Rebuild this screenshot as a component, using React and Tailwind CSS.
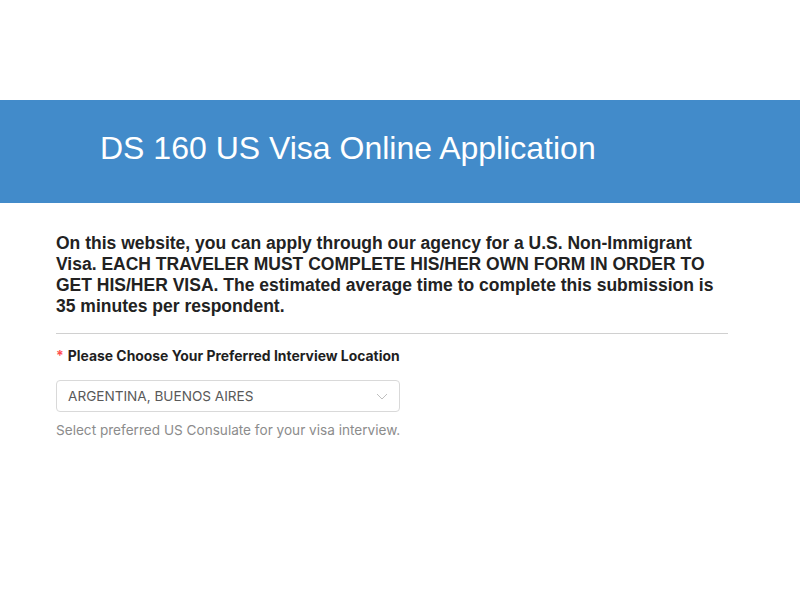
export default function App() {
  return (
    <div className="min-h-[600px] bg-white pt-[100px]">
      <div className="h-[103px] bg-[#428bca] flex items-center pl-[100px] pb-[8px]">
        <h1 className="text-white text-[32px] leading-none" style={{ fontFamily: '"Liberation Sans", Arial, sans-serif' }}>
          DS 160 US Visa Online Application
        </h1>
      </div>
      <div className="ml-[56px] w-[672px] pt-[30px]">
        <p className="text-[17.5px] leading-[21px] font-bold text-[#222]" style={{ fontFamily: '"Liberation Sans", Arial, sans-serif' }}>
          On this website, you can apply through our agency for a U.S. Non-Immigrant Visa. EACH TRAVELER MUST COMPLETE HIS/HER OWN FORM IN ORDER TO GET HIS/HER VISA. The estimated average time to complete this submission is 35 minutes per respondent.
        </p>
        <div className="h-px bg-[#d0d0d0] mt-[16px]" />
        <div style={{ fontFamily: 'Inter, sans-serif' }}>
          <div className="mt-[11px] text-[13.9px] leading-[22px] font-bold text-[#1f1f1f]">
            <span className="text-[#ff4d4f] mr-[4px]">*</span>Please Choose Your Preferred Interview Location
          </div>
          <div className="mt-[13px] w-[344px] h-[32px] border border-[#d9d9d9] rounded-[4px] flex items-center justify-between pl-[11px] pr-[11px]">
            <span className="text-[13.6px] text-[#595959]">ARGENTINA, BUENOS AIRES</span>
            <svg width="12" height="12" viewBox="0 0 12 12" fill="none">
              <path d="M1 4l5 5 5-5" stroke="#bfbfbf" strokeWidth="1" />
            </svg>
          </div>
          <div className="mt-[7px] text-[13.6px] leading-[22px] text-[#8c8c8c]">
            Select preferred US Consulate for your visa interview.
          </div>
        </div>
      </div>
    </div>
  );
}
